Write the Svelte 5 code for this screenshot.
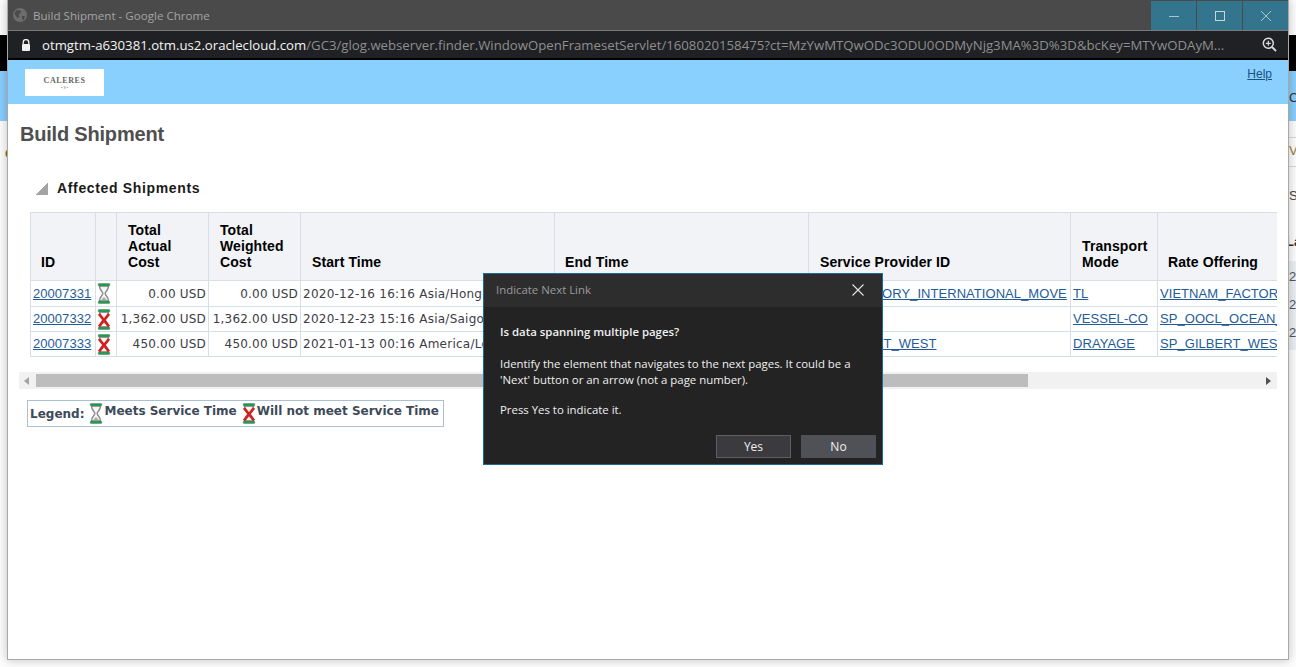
<script>
  const rows = [
    { id: '20007331', ok: true, actual: '0.00 USD', weighted: '0.00 USD', start: '2020-12-16 16:16 Asia/Hongkong', end: '', sp: 'SHIP_FACTORY_INTERNATIONAL_MOVE', mode: 'TL', rate: 'VIETNAM_FACTORY_INTERNATIONAL' },
    { id: '20007332', ok: false, actual: '1,362.00 USD', weighted: '1,362.00 USD', start: '2020-12-23 15:16 Asia/Saigon', end: '', sp: 'OOCL', mode: 'VESSEL-CO', rate: 'SP_OOCL_OCEAN_RATE' },
    { id: '20007333', ok: false, actual: '450.00 USD', weighted: '450.00 USD', start: '2021-01-13 00:16 America/Los_Angeles', end: '', sp: 'SP_GILBERT_WEST', mode: 'DRAYAGE', rate: 'SP_GILBERT_WEST_RATE' }
  ];
  const widths = [65, 21, 92, 92, 254, 254, 262, 87, 200];
</script>

{#snippet hourglass(ok)}
  <svg class="glass" width="14" height="21" viewBox="0 0 14 21" aria-hidden="true">
    <path d="M2.5 3 C2.5 7.5 5.8 8.5 5.8 10.5 C5.8 12.5 2.5 13.5 2.5 18 H11.5 C11.5 13.5 8.2 12.5 8.2 10.5 C8.2 8.5 11.5 7.5 11.5 3 Z" fill="#f4f5f4" stroke="#8a8a8a" stroke-width="1.4" />
    <rect x="1.2" y="0.4" width="11.6" height="2.6" rx="1" fill="#17a04b" stroke="#6d7f74" stroke-width=".6" />
    <rect x="1.2" y="18" width="11.6" height="2.6" rx="1" fill="#17a04b" stroke="#6d7f74" stroke-width=".6" />
    {#if ok}
      <path d="M4 17.2 L7 14 L10 17.2 Z" fill="#a5aeaa" />
    {:else}
      <path d="M2 5 L12 17.5 M12 5 L2 17.5" stroke="#d3201f" stroke-width="2.8" />
    {/if}
  </svg>
{/snippet}

<div class="desktop">
  <div class="bg-black"></div>
  <div class="bg-blue"></div>
  <span class="bg-c">C</span>
  <span class="bg-o">C</span>
  <span class="bg-v">V</span>
  <div class="bg-line l1"></div>
  <div class="bg-line l2"></div>
  <span class="bg-s">S</span>
  <span class="bg-la">La</span>
  <div class="bg-band"><span>20</span><span>20</span><span>20</span></div>

  <div class="window">
    <header class="titlebar">
      <svg class="globe" width="14" height="14" viewBox="0 0 14 14" aria-hidden="true">
        <circle cx="7" cy="7" r="7" fill="#6d6d6d" />
        <path d="M3 2.5 L7 2 L8 4.5 L5.5 6.5 L6.5 9 L4.5 10 L1.5 6 Z M9 8 L12 8 L10.5 12 L9 11 Z" fill="#4a4a4a" />
      </svg>
      <span class="wintitle">Build Shipment - Google Chrome</span>
      <div class="controls">
        <div class="ctl"><svg width="12" height="12" viewBox="0 0 12 12"><path d="M1 6.5H11" stroke="#a9c6d2" /></svg></div>
        <div class="ctl"><svg width="12" height="12" viewBox="0 0 12 12"><rect x="1.5" y="1.5" width="9" height="9" fill="none" stroke="#c4d6de" /></svg></div>
        <div class="ctl"><svg width="12" height="12" viewBox="0 0 12 12"><path d="M1 1L11 11M11 1L1 11" stroke="#a9c6d2" /></svg></div>
      </div>
    </header>
    <div class="addressbar">
      <svg class="lock" width="10" height="12" viewBox="0 0 10 12" aria-hidden="true">
        <path d="M2.2 5V3.4a2.8 2.8 0 0 1 5.6 0V5" fill="none" stroke="#f1f1f1" stroke-width="1.3" />
        <rect x="1" y="5" width="8" height="7" rx="1" fill="#f1f1f1" />
      </svg>
      <div class="url"><span class="host">otmgtm-a630381.otm.us2.oraclecloud.com</span>/GC3/glog.webserver.finder.WindowOpenFramesetServlet/1608020158475?ct=MzYwMTQwODc3ODU0ODMyNjg3MA%3D%3D&amp;bcKey=MTYwODAyM...</div>
      <svg class="zoomicon" width="15" height="15" viewBox="0 0 15 15" aria-hidden="true">
        <circle cx="6.3" cy="6.3" r="5" fill="none" stroke="#dcdcdc" stroke-width="1.5" />
        <path d="M10 10L14 14" stroke="#dcdcdc" stroke-width="1.8" />
        <path d="M3.8 6.3H8.8M6.3 3.8V8.8" stroke="#dcdcdc" stroke-width="1.2" />
      </svg>
    </div>

    <div class="page">
      <div class="brand">
        <div class="logo"><span class="logo-name">CALERES</span><span class="logo-sub">• S •</span></div>
        <a class="help" href="#help">Help</a>
      </div>
      <h1>Build Shipment</h1>
      <div class="section"><span class="tri"></span><h2>Affected Shipments</h2></div>

      <div class="tablewrap">
        <table>
          <colgroup>{#each widths as w}<col style="width:{w}px" />{/each}</colgroup>
          <thead>
            <tr>
              <th class="tight">ID</th><th></th><th>Total<br />Actual<br />Cost</th><th>Total<br />Weighted<br />Cost</th>
              <th>Start Time</th><th class="tight">End Time</th><th>Service Provider ID</th><th>Transport<br />Mode</th><th class="tight">Rate Offering</th>
            </tr>
          </thead>
          <tbody>
            {#each rows as r}
              <tr>
                <td class="link-cell"><a href="#s">{r.id}</a></td>
                <td class="icon-cell">{@render hourglass(r.ok)}</td>
                <td class="num">{r.actual}</td>
                <td class="num">{r.weighted}</td>
                <td class="txt">{r.start}</td>
                <td class="txt">{r.end}</td>
                <td class="link-cell"><a href="#p">{r.sp}</a></td>
                <td class="link-cell"><a href="#m">{r.mode}</a></td>
                <td class="link-cell"><a href="#r">{r.rate}</a></td>
              </tr>
            {/each}
          </tbody>
        </table>
      </div>

      <div class="scrollbar">
        <span class="arrow left"></span>
        <div class="track"><div class="thumb"></div></div>
        <span class="arrow right"></span>
      </div>

      <div class="legend">
        <b class="leg-label">Legend:</b>
        {@render hourglass(true)}<b class="leg-text">Meets Service Time</b>
        {@render hourglass(false)}<b class="leg-text">Will not meet Service Time</b>
      </div>
    </div>
  </div>

  <div class="dialog" role="dialog" aria-label="Indicate Next Link">
    <div class="dlg-head">
      <span>Indicate Next Link</span>
      <svg width="12" height="12" viewBox="0 0 12 12" aria-hidden="true"><path d="M.5.5L11.5 11.5M11.5.5L.5 11.5" stroke="#e4e4e4" stroke-width="1.1" /></svg>
    </div>
    <div class="dlg-body">
      <p class="strong">Is data spanning multiple pages?</p>
      <p class="mid">Identify the element that navigates to the next pages. It could be a<br />'Next' button or an arrow (not a page number).</p>
      <p>Press Yes to indicate it.</p>
    </div>
    <div class="dlg-foot">
      <button class="yes">Yes</button>
      <button class="no">No</button>
    </div>
  </div>
</div>

<style>
  :global(body) { margin: 0; background: #fff; overflow: hidden; }
  .desktop { position: relative; width: 1296px; height: 667px; overflow: hidden; background: #fff; font-family: "Liberation Sans", Arial, sans-serif; }

  .bg-black { position: absolute; left: 0; right: 0; top: 35px; height: 36px; background: #000; }
  .bg-blue { position: absolute; left: 0; right: 0; top: 71px; height: 50px; background: #8ad0ff; }
  .bg-c { position: absolute; left: 1289px; top: 90px; font-size: 13px; color: #333; }
  .bg-o { position: absolute; left: 5px; top: 146px; font-size: 13px; color: #8a6a20; font-weight: bold; }
  .bg-v { position: absolute; left: 1289px; top: 143px; font-size: 13px; color: #9a7a40; }
  .bg-line { position: absolute; left: 1289px; right: 0; height: 1px; background: #ddd; }
  .l1 { top: 137px; }
  .l2 { top: 166px; }
  .bg-s { position: absolute; left: 1289px; top: 188px; font-size: 13px; color: #444; }
  .bg-la { position: absolute; left: 1286px; top: 234px; font-size: 13px; font-weight: bold; color: #333; }
  .bg-band { position: absolute; left: 1289px; right: 0; top: 261px; height: 89px; background: #eef2f6; display: flex; flex-direction: column; gap: 12px; padding-top: 8px; box-sizing: border-box; font-size: 13px; line-height: 16px; color: #555; }

  .window { position: absolute; left: 8px; top: 0; width: 1280px; height: 659px; display: flex; flex-direction: column; background: #fff; box-shadow: 0 0 0 1px #a8a8a8, 0 0 10px 2px rgba(0,0,0,.22); }

  .titlebar { height: 30px; flex: none; display: flex; align-items: center; background: #4a4a4a; border-bottom: 1px solid #7a7a7a; }
  .globe { margin-left: 5px; }
  .wintitle { margin: 0 0 0 6px; font: 11.6px "Open Sans", "Noto Sans", sans-serif; color: #a4a4a4; flex: 1; }
  .controls { display: flex; gap: 1px; align-self: stretch; padding-top: 1px; }
  .ctl { width: 45px; background: #33758c; display: flex; align-items: center; justify-content: center; }

  .addressbar { height: 27px; flex: none; display: flex; align-items: center; background: #202124; border-bottom: 2px solid #000; }
  .lock { margin-left: 13px; }
  .url { margin-left: 11px; flex: 1; width: 0; white-space: nowrap; overflow: hidden; font: 13.2px "Open Sans", "Noto Sans", sans-serif; color: #8f8f8f; }
  .host { color: #f4f4f4; }
  .zoomicon { margin-right: 11px; margin-left: 8px; }

  .page { flex: 1; min-height: 0; display: flex; flex-direction: column; background: #fff; }
  .brand { height: 44px; flex: none; background: #8ad0ff; display: flex; justify-content: space-between; align-items: flex-start; padding: 9px 16px 0 17px; box-sizing: border-box; }
  .logo { width: 79px; height: 27px; background: #fff; display: flex; flex-direction: column; align-items: center; justify-content: center; color: #666; font-family: "Liberation Serif", serif; }
  .logo-name { font-size: 8px; font-weight: bold; letter-spacing: .6px; line-height: 9px; }
  .logo-sub { font-size: 4px; line-height: 5px; }
  .help { font-size: 12px; color: #1c4f82; line-height: 14px; margin-top: -2px; }

  h1 { margin: 18px 0 0 12px; font-size: 20px; line-height: 24px; font-weight: bold; color: #4f4f4f; letter-spacing: -.2px; }
  .section { display: flex; align-items: center; margin: 32px 0 0 28px; height: 20px; }
  .tri { width: 12px; height: 12px; background: linear-gradient(135deg, #fff 50%, #a4a4a4 50%); margin-top: 1px; }
  h2 { margin: 0 0 0 9px; font-size: 14px; font-weight: bold; color: #1a1a1a; letter-spacing: .65px; }

  .tablewrap { margin: 14px 11px 0 22px; overflow: hidden; flex: none; }
  table { border-collapse: collapse; table-layout: fixed; width: 1327px; border: 1px solid #d6dfe8; }
  th { height: 68px; padding: 0 4px 10px 11px; box-sizing: border-box; background: #f1f3f7; border: 1px solid #d6dfe8; text-align: left; vertical-align: bottom; font-size: 14px; line-height: 16px; color: #000; font-weight: bold; letter-spacing: .1px; }
  th.tight { padding-left: 10px; }
  td { padding: 0 2px; border: 1px solid #d6dfe8; white-space: nowrap; overflow: hidden; height: 24px; font-size: 12px; }
  tbody tr:first-child td { height: 25px; }
  tbody tr td.link-cell { padding-bottom: 1px; height: 23px; }
  tbody tr:first-child td.link-cell { height: 24px; }
  .link-cell a { color: #1f5c99; font-size: 13px; text-decoration: underline; letter-spacing: .05px; }
  .icon-cell { padding: 0 0 0 1px; text-align: left; line-height: 0; }
  .num, .txt { font-family: "DejaVu Sans", sans-serif; font-size: 12px; color: #3c3c46; }
  .num { text-align: right; letter-spacing: .2px; }
  .txt { letter-spacing: .25px; }
  .glass { flex: none; }

  .scrollbar { margin: 15px 11px 0 11px; height: 17px; background: #f1f1f1; display: flex; align-items: center; flex: none; }
  .track { flex: 1; height: 13px; }
  .thumb { width: 992px; height: 13px; background: #bdbdbd; }
  .arrow { width: 0; height: 0; border-top: 4px solid transparent; border-bottom: 4px solid transparent; flex: none; }
  .arrow.left { border-right: 5px solid #a3a3a3; margin: 0 7px 0 5px; }
  .arrow.right { border-left: 5px solid #505050; margin: 0 6px 0 6px; }

  .legend { margin: 11px 0 0 19px; width: 417px; height: 27px; box-sizing: border-box; border: 1px solid #a9c0d6; display: flex; align-items: center; padding-left: 2px; font-family: "DejaVu Sans", sans-serif; font-size: 12px; color: #3d4a58; white-space: nowrap; flex: none; }
  .leg-label { margin-right: 5px; }
  .leg-text { margin: -5px 5px 0 1px; }

  .dialog { position: absolute; left: 483px; top: 273px; width: 400px; height: 192px; box-sizing: border-box; border: 1px solid #1a6aa0; background: #232323; display: flex; flex-direction: column; font-family: "Open Sans", "Noto Sans", sans-serif; color: #f0f0f0; font-size: 11.4px; }
  .dlg-head { height: 33px; flex: none; background: #2d2d2d; display: flex; align-items: center; justify-content: space-between; padding: 0 18px 2px 12px; box-sizing: border-box; color: #9a9a9a; }
  .dlg-body { flex: 1; min-height: 0; padding: 17px 16px 0 16px; }
  .dlg-body p { margin: 0 0 16px; line-height: 16px; white-space: nowrap; }
  .dlg-body p.mid { margin-bottom: 14px; }
  .strong { font-weight: 600; }
  .dlg-foot { display: flex; justify-content: flex-end; gap: 10px; padding: 0 6px 6px 0; }
  button { width: 75px; height: 23px; padding: 0; font: 12px "Open Sans", "Noto Sans", sans-serif; color: #f0f0f0; box-sizing: border-box; }
  .yes { background: #3a3a3f; border: 1px solid #5e5e63; }
  .no { background: #505057; border: 1px solid #505057; }
</style>
